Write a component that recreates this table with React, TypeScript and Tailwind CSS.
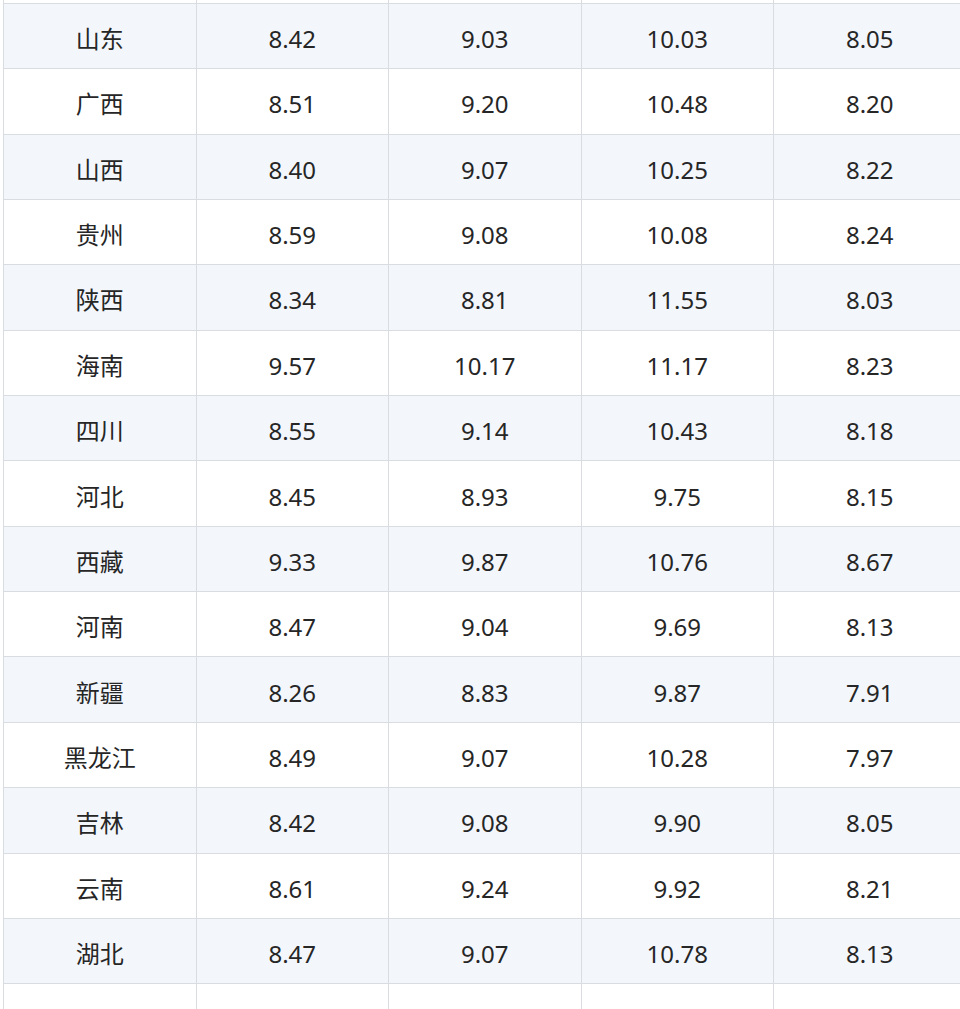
import React from "react";

const rows: [string, string, string, string, string][] = [
  ["", "", "", "", ""],
  ["山东", "8.42", "9.03", "10.03", "8.05"],
  ["广西", "8.51", "9.20", "10.48", "8.20"],
  ["山西", "8.40", "9.07", "10.25", "8.22"],
  ["贵州", "8.59", "9.08", "10.08", "8.24"],
  ["陕西", "8.34", "8.81", "11.55", "8.03"],
  ["海南", "9.57", "10.17", "11.17", "8.23"],
  ["四川", "8.55", "9.14", "10.43", "8.18"],
  ["河北", "8.45", "8.93", "9.75", "8.15"],
  ["西藏", "9.33", "9.87", "10.76", "8.67"],
  ["河南", "8.47", "9.04", "9.69", "8.13"],
  ["新疆", "8.26", "8.83", "9.87", "7.91"],
  ["黑龙江", "8.49", "9.07", "10.28", "7.97"],
  ["吉林", "8.42", "9.08", "9.90", "8.05"],
  ["云南", "8.61", "9.24", "9.92", "8.21"],
  ["湖北", "8.47", "9.07", "10.78", "8.13"],
  ["", "", "", "", ""],
];

export default function App() {
  return (
    <div className="w-[960px] h-[1009px] overflow-hidden bg-white">
      <div
        className="ml-[3px] mt-[-61.5px] w-[963.5px] border-l border-[#d9dde2] text-[24px] text-[#262626]"
        style={{ fontFamily: '"Noto Sans", "Noto Sans CJK SC", sans-serif' }}
      >
        {rows.map((r, i) => (
          <div
            key={i}
            className={`grid grid-cols-5 h-[65.37px] border-b border-[#d9dde2] ${
              i % 2 === 1 ? "bg-[#f3f6fb]" : "bg-white"
            }`}
          >
            {r.map((c, j) => (
              <div
                key={j}
                className="flex items-center justify-center border-r border-[#d9dde2] pt-[6px]"
              >
                {c}
              </div>
            ))}
          </div>
        ))}
      </div>
    </div>
  );
}
